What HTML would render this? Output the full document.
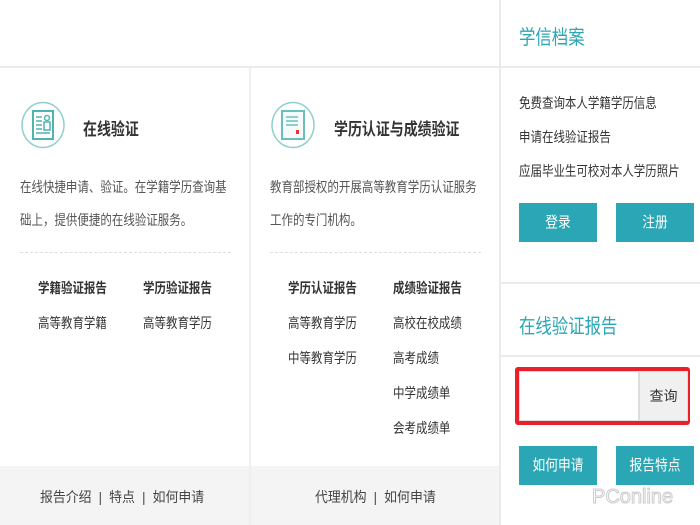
<!DOCTYPE html>
<html><head><meta charset="utf-8"><style>
*{margin:0;padding:0;box-sizing:border-box}
body{width:700px;height:525px;background:#fff;position:relative;overflow:hidden;font-family:"Liberation Sans","Noto Sans CJK SC",sans-serif;color:#333}
.a{position:absolute;white-space:nowrap}
.s{transform:scaleX(0.82);transform-origin:0 0}
.f{transform:scaleX(0.92);transform-origin:0 0}
.t{font-size:14px;color:#333}
.d{font-size:14px;color:#555}
.b{font-weight:bold}
.btn{position:absolute;background:#2ba6b4;color:#fff;font-size:15px;text-align:center;line-height:39px;width:78px;height:39px}
.btn span{display:inline-block;transform:scaleX(0.85)}
.h{color:#2ba6b4;font-size:20px}
</style></head><body>
<div class="a" style="left:0;top:66px;width:500px;height:2px;background:#ebebeb"></div>
<div class="a" style="left:249px;top:68px;width:2px;height:457px;background:#f0f0f0"></div>
<div class="a" style="left:499px;top:0;width:2px;height:525px;background:#ebebeb"></div>
<div class="a" style="left:0;top:466px;width:249px;height:59px;background:#f4f4f4"></div>
<div class="a" style="left:251px;top:466px;width:248px;height:59px;background:#f4f4f4"></div>

<svg class="a" style="left:20px;top:101px" width="46" height="48"><ellipse cx="23" cy="24" rx="21" ry="22.5" fill="none" stroke="#8fd0cc" stroke-width="1.5"/><rect x="13" y="10" width="20" height="28" fill="none" stroke="#4fb3b0" stroke-width="2"/><path d="M16 16h6M16 20h6M16 24h6M16 28h6M16 32h14" stroke="#4fb3b0" stroke-width="1.5"/><circle cx="27" cy="17" r="2.5" fill="none" stroke="#4fb3b0" stroke-width="1.5"/><rect x="24" y="21" width="6" height="8" fill="none" stroke="#4fb3b0" stroke-width="1.5"/></svg>
<div class="a b s" style="left:83px;top:115px;font-size:17px;color:#333">在线验证</div>
<div class="a d s" style="left:20px;top:177px">在线快捷申请、验证。在学籍学历查询基</div>
<div class="a d s" style="left:20px;top:210px">础上，提供便捷的在线验证服务。</div>
<div class="a" style="left:20px;top:252px;width:211px;border-top:1px dashed #ddd"></div>
<div class="a t b s" style="left:38px;top:278px">学籍验证报告</div>
<div class="a t b s" style="left:143px;top:278px">学历验证报告</div>
<div class="a t s" style="left:38px;top:313px">高等教育学籍</div>
<div class="a t s" style="left:143px;top:313px">高等教育学历</div>
<div class="a t f" style="left:40px;top:487px;color:#444">报告介绍 &nbsp;|&nbsp; 特点 &nbsp;|&nbsp; 如何申请</div>

<svg class="a" style="left:270px;top:101px" width="46" height="48"><ellipse cx="23" cy="24" rx="21" ry="22.5" fill="none" stroke="#8fd0cc" stroke-width="1.5"/><rect x="12" y="10" width="22" height="28" fill="#f4fbfa" stroke="#6cc0bc" stroke-width="2"/><path d="M16 16h12M16 20h12M16 24h12" stroke="#6cc0bc" stroke-width="1.5"/><rect x="26" y="29" width="3" height="4" fill="#e33"/></svg>
<div class="a b s" style="left:334px;top:115px;font-size:17px;color:#333">学历认证与成绩验证</div>
<div class="a d s" style="left:270px;top:177px">教育部授权的开展高等教育学历认证服务</div>
<div class="a d s" style="left:270px;top:210px">工作的专门机构。</div>
<div class="a" style="left:270px;top:252px;width:211px;border-top:1px dashed #ddd"></div>
<div class="a t b s" style="left:288px;top:278px">学历认证报告</div>
<div class="a t b s" style="left:393px;top:278px">成绩验证报告</div>
<div class="a t s" style="left:288px;top:313px">高等教育学历</div>
<div class="a t s" style="left:393px;top:313px">高校在校成绩</div>
<div class="a t s" style="left:288px;top:348px">中等教育学历</div>
<div class="a t s" style="left:393px;top:348px">高考成绩</div>
<div class="a t s" style="left:393px;top:383px">中学成绩单</div>
<div class="a t s" style="left:393px;top:418px">会考成绩单</div>
<div class="a t f" style="left:315px;top:487px;color:#444">代理机构 &nbsp;|&nbsp; 如何申请</div>

<div class="a h s" style="left:519px;top:21px">学信档案</div>
<div class="a" style="left:501px;top:66px;width:199px;height:2px;background:#ebebeb"></div>
<div class="a t s" style="left:519px;top:93px">免费查询本人学籍学历信息</div>
<div class="a t s" style="left:519px;top:127px">申请在线验证报告</div>
<div class="a t s" style="left:519px;top:161px">应届毕业生可校对本人学历照片</div>
<div class="btn" style="left:519px;top:203px"><span>登录</span></div>
<div class="btn" style="left:616px;top:203px"><span>注册</span></div>
<div class="a" style="left:501px;top:282px;width:199px;height:2px;background:#ebebeb"></div>
<div class="a h s" style="left:519px;top:310px">在线验证报告</div>
<div class="a" style="left:501px;top:355px;width:199px;height:2px;background:#ebebeb"></div>
<div class="a" style="left:515px;top:367px;width:175px;height:58px;border:4px solid #e8202a;border-radius:3px;background:#fff"></div>
<div class="a" style="left:519px;top:371px;width:120px;height:50px;border:1px solid #ddd;background:#fff"></div>
<div class="a" style="left:639px;top:371px;width:49px;height:50px;background:#f0f0f0;border:1px solid #ddd;font-size:14px;line-height:48px;text-align:center;color:#333">查询</div>
<div class="btn" style="left:519px;top:446px"><span>如何申请</span></div>
<div class="btn" style="left:616px;top:446px"><span>报告特点</span></div>
<div class="a" style="left:592px;top:486px;font-size:20px;color:#fff;-webkit-text-stroke:1px #ccc">PConline</div>
</body></html>
